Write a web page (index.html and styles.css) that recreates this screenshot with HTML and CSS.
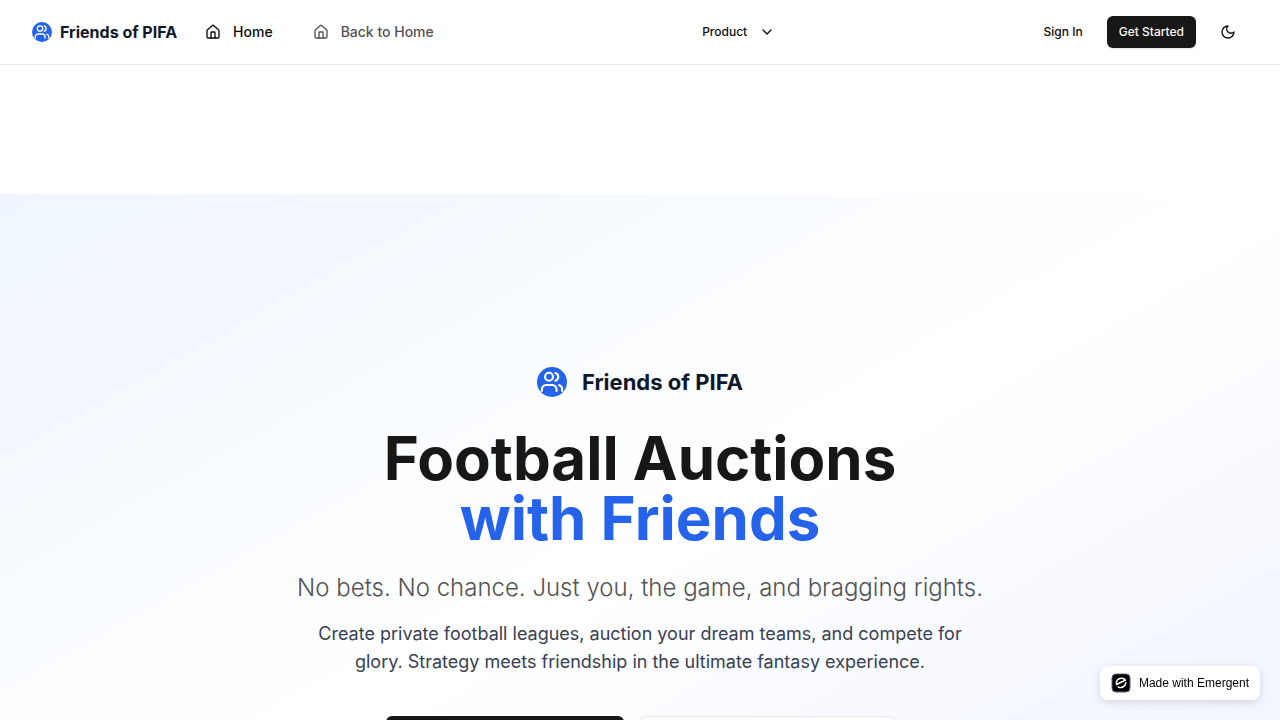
FILE: index.html
```html
<!DOCTYPE html>
<html lang="en">
<head>
<meta charset="utf-8">
<meta name="viewport" content="width=device-width, initial-scale=1">
<title>Friends of PIFA</title>
<link rel="stylesheet" href="styles.css">
</head>
<body>
<svg class="sprite" aria-hidden="true">
  <symbol id="logo" viewBox="0 0 40 40">
    <circle cx="20" cy="20" r="20" fill="#2563eb"/>
    <g fill="none" stroke="#fff" stroke-width="2.8" stroke-linecap="round" stroke-linejoin="round">
      <circle cx="16" cy="13" r="5.3"/>
      <path d="M24.500 8a5.3 5.3 0 0 1 0 10.200"/>
      <path d="M6.500 32v-2.500a5.500 5.500 0 0 1 5.500-5.500h8.500a5.500 5.500 0 0 1 5.500 5.500V32"/>
      <path d="M29.500 24.200a5.500 5.500 0 0 1 4 5.300V32"/>
    </g>
  </symbol>
  <symbol id="home" viewBox="0 0 24 24">
    <path d="M15 21v-8a1 1 0 0 0-1-1h-4a1 1 0 0 0-1 1v8"/>
    <path d="M3 10a2 2 0 0 1 .709-1.528l7-6a2 2 0 0 1 2.582 0l7 6A2 2 0 0 1 21 10v9a2 2 0 0 1-2 2H5a2 2 0 0 1-2-2z"/>
  </symbol>
</svg>
<header class="header">
  <div class="header-left">
    <a class="brand" href="#"><svg class="brand-icon"><use href="#logo"/></svg>Friends of PIFA</a>
    <nav class="nav">
      <a class="nav-link nav-link-active" href="#"><svg class="icon"><use href="#home"/></svg>Home</a>
      <a class="nav-link" href="#"><svg class="icon"><use href="#home"/></svg>Back to Home</a>
    </nav>
  </div>
  <button class="btn btn-menu" type="button">Product<svg class="icon" viewBox="0 0 24 24"><path d="m6 9 6 6 6-6"/></svg></button>
  <div class="header-right">
    <button class="btn" type="button">Sign In</button>
    <button class="btn btn-dark" type="button">Get Started</button>
    <button class="btn btn-icon" type="button" aria-label="Toggle theme"><svg class="icon" viewBox="0 0 24 24"><path d="M12 3a6 6 0 0 0 9 9 9 9 0 1 1-9-9Z"/></svg></button>
  </div>
</header>
<main class="main">
  <section class="hero">
    <div class="hero-brand"><svg class="hero-icon"><use href="#logo"/></svg>Friends of PIFA</div>
    <h1 class="title">Football Auctions<br><span class="title-accent">with Friends</span></h1>
    <p class="tagline">No bets. No chance. Just you, the game, and bragging rights.</p>
    <p class="description">Create private football leagues, auction your dream teams, and compete for glory. Strategy meets friendship in the ultimate fantasy experience.</p>
    <div class="actions">
      <button class="cta cta-primary" type="button" aria-label="Get Started"></button>
      <button class="cta cta-secondary" type="button" aria-label="Sign In"></button>
    </div>
  </section>
</main>
<a class="badge" href="#">
  <svg class="badge-icon" viewBox="0 0 20 20"><rect x="1" y="1" width="18" height="18" rx="4" fill="#000" stroke="#596078" stroke-width="1"/><g fill="none" stroke="#fff" stroke-width="1.500" stroke-linecap="round"><path d="M5.500 11.500C4.500 8 7.200 5.200 10.400 5.200c2 0 3.400.8 4 2L5.500 11.500"/><path d="M7.200 14c3 1.500 7 0 7.600-4.200"/></g></svg>
  Made with Emergent
</a>
</body>
</html>
```
FILE: styles.css
```css
* { box-sizing: border-box; }

body {
  margin: 0;
  background: #fff;
  color: #0a0a0a;
  font-family: Inter, "Liberation Sans", sans-serif;
}

a { color: inherit; text-decoration: none; }

.sprite { position: absolute; width: 0; height: 0; }

.icon {
  width: 16px;
  height: 16px;
  flex: none;
  fill: none;
  stroke: currentColor;
  stroke-width: 2;
  stroke-linecap: round;
  stroke-linejoin: round;
}

.header {
  display: flex;
  align-items: center;
  justify-content: space-between;
  padding: 12px 32px;
  border-bottom: 1px solid #e5e5e5;
}

.header-left { display: flex; align-items: center; gap: 16px; }
.header-right { display: flex; align-items: center; gap: 12px; }

.brand {
  display: flex;
  align-items: center;
  gap: 8px;
  color: #0f172a;
  font-size: 16px;
  font-weight: 700;
  line-height: 24px;
}

.brand-icon { width: 20px; height: 20px; }

.nav { display: flex; gap: 16px; }

.nav-link {
  display: flex;
  align-items: center;
  gap: 12px;
  padding: 8px 12px;
  color: #525252;
  font-size: 14px;
  font-weight: 500;
  line-height: 20px;
}

.nav-link-active { color: #0a0a0a; }

.btn {
  display: flex;
  align-items: center;
  height: 32px;
  padding: 0 12px;
  border: 0;
  border-radius: 6px;
  background: transparent;
  color: #0a0a0a;
  font: 500 12px/16px Inter, "Liberation Sans", sans-serif;
}

.btn-menu { gap: 12px; }

.btn-dark {
  background: #171717;
  color: #fafafa;
  box-shadow: 0 1px 2px rgba(0, 0, 0, 0.1);
}

.btn-icon { height: 40px; }

.main { padding-top: 129px; }

.hero {
  display: flex;
  flex-direction: column;
  align-items: center;
  min-height: 100vh;
  padding: 172px 16px 0;
  background: linear-gradient(to bottom right, #eff6ff, #fff, #eef2ff);
  text-align: center;
}

.hero-brand {
  display: flex;
  align-items: center;
  gap: 15px;
  margin-bottom: 30px;
  color: #0f172a;
  font-size: 22px;
  font-weight: 700;
  line-height: 32px;
}

.hero-icon { width: 30px; height: 30px; }

.title {
  margin: 0 0 24px;
  color: #171717;
  font-size: 60px;
  font-weight: 700;
  line-height: 60px;
}

.title-accent { color: #2563eb; }

.tagline {
  margin: 0 0 16px;
  color: #525252;
  font-size: 24px;
  font-weight: 300;
  line-height: 32px;
}

.description {
  max-width: 672px;
  margin: 0 0 40px;
  color: #374151;
  font-size: 18px;
  line-height: 28px;
}

.actions { display: flex; gap: 16px; }

.cta {
  height: 48px;
  border-radius: 6px;
}

.cta-primary {
  min-width: 238px;
  border: 0;
  background: #171717;
}

.cta-secondary {
  min-width: 255px;
  border: 1px solid #e5e5e5;
  background: #fff;
}

.badge {
  position: fixed;
  right: 20px;
  bottom: 20px;
  display: flex;
  align-items: center;
  gap: 8px;
  padding: 7px 11px;
  border-radius: 8px;
  background: #fff;
  color: #000;
  font: 12px/20px "Liberation Sans", sans-serif;
  box-shadow: 0 2px 8px rgba(0, 0, 0, 0.15);
}

.badge-icon { width: 20px; height: 20px; }
```
